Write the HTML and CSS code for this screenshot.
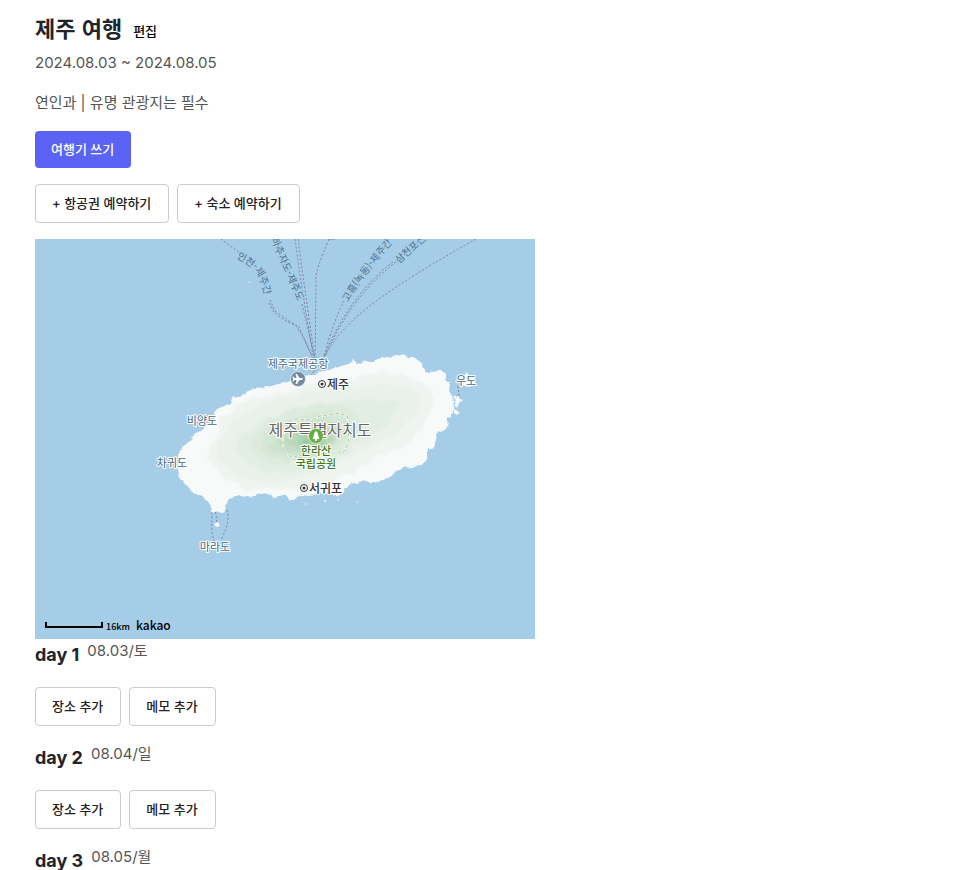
FILE: index.html
```html
<!DOCTYPE html>
<html lang="ko">
<head>
<meta charset="utf-8">
<meta name="viewport" content="width=device-width, initial-scale=1">
<title>제주 여행</title>
<link rel="stylesheet" href="styles.css">
</head>
<body>
<main class="trip">
  <header class="trip-header">
    <div class="title-row">
      <h1>제주 여행</h1>
      <button type="button" class="text-button">편집</button>
    </div>
    <p class="dates">2024.08.03 ~ 2024.08.05</p>
    <p class="tags">연인과 | 유명 관광지는 필수</p>
    <button type="button" class="button primary">여행기 쓰기</button>
    <div class="button-row">
      <button type="button" class="button">+ 항공권 예약하기</button>
      <button type="button" class="button">+ 숙소 예약하기</button>
    </div>
  </header>

  <svg class="map" viewBox="35 239 500 400" role="img" aria-label="제주특별자치도 지도">
    <defs>
      <filter id="coast" x="-5%" y="-5%" width="110%" height="110%">
        <feTurbulence type="fractalNoise" baseFrequency="0.13" numOctaves="2" seed="4" result="n"/>
        <feDisplacementMap in="SourceGraphic" in2="n" scale="6" xChannelSelector="R" yChannelSelector="G"/>
      </filter>
      <filter id="contour" x="-10%" y="-10%" width="120%" height="120%" color-interpolation-filters="sRGB">
        <feTurbulence type="fractalNoise" baseFrequency="0.08" numOctaves="2" seed="9" result="n"/>
        <feDisplacementMap in="SourceGraphic" in2="n" scale="10" xChannelSelector="R" yChannelSelector="G"/>
        <feGaussianBlur stdDeviation="1"/>
      </filter>
      <path id="route-incheon" d="M236 258Q252 266 257 274Q262 282 267 306"/>
      <path id="route-chuja" d="M271 239L303 314"/>
      <path id="route-goheung" d="M348 302Q360 279 403 231"/>
      <path id="route-samcheon" d="M399 264L440 227"/>
    </defs>
    <rect x="35" y="239" width="500" height="400" fill="#a5cde7"/>

    <g class="ferry">
      <path d="M221 239L240 253M269 303L274 312Q282 320 295 325Q303 334 314 362M270 300L275 311Q291 322 299 327L312 356"/>
      <path d="M295 239Q301 285 314 361M298 239Q304 284 315 361M302 304L315 359M333 239H329Q315 271 316 280L315 372M335 239H329"/>
      <path d="M344 301Q332 324 323 361M393 262Q348 296 322 361M396 262Q350 297 325 357M476 239Q381 292 350 323Q334 338 322 361L310 376"/>
      <path d="M213 508Q210 528 214 541M214 508Q218 518 216 524M227 510Q231 521 221 540M458 386L459 398"/>
    </g>

    <path class="land" filter="url(#coast)" d="M177 472L179 464 178 455 183 447 190 440 195 435 202 429 208 425 214 417 216 409 223 406 230 403 233 396 240 397 248 392 260 388 273 386 283 382 297 378 313 374 327 371 335 368 350 365 353 359 360 363 367 362 382 358 397 357 402 354 407 357 418 357 421 366 427 371 442 370 446 374 446 380 451 382 450 393 455 402 454 410 448 418 447 428 438 432 435 443 427 454 427 460 422 466 403 468 390 477 373 482 353 483 345 490 337 497 327 492 310 497 300 496 290 501 283 495 273 497 267 493 255 497 240 495 230 498 225 507 223 513 218 511 214 513 208 503 203 495 192 492 183 482Z"/>
    <g class="land">
      <path d="M456 397L460 401 457 408 455 405ZM454 409L459 413 457 415 454 413ZM459 375L465 375 466 372 469 375 475 377 475 385 469 387 462 385ZM214 524L218 522 220 526 216 527Z"/>
      <path d="M454 396L458 400M458 396V402L455 406M458 399L462 401M454 410L459 413" fill="none" stroke="#f8f9f9" stroke-width="2"/>
      <circle cx="249" cy="282" r="0.7"/><circle cx="306" cy="504" r="0.7"/><circle cx="325" cy="501" r="1"/><circle cx="338" cy="500" r="0.7"/><circle cx="357" cy="502" r="0.7"/>
    </g>
    <g filter="url(#contour)" fill="#5faa68">
      <path opacity="0.06" d="M207 456L210 446 217 439 218 421 235 409 248 399 288 392 318 382 348 379 382 372 408 376 432 389 433 402 428 419 405 446 368 462 335 482 288 491 245 489 222 479Z"/>
      <path opacity="0.04" d="M216 456L224 436 232 420 262 404 302 394 350 386 392 384 420 394 416 412 392 436 352 456 320 474 280 483 242 479Z"/>
      <path opacity="0.05" d="M235 452L242 436 252 426 295 406 355 399 400 402 388 426 355 446 335 459 295 472 262 472Z"/>
      <ellipse opacity="0.05" cx="306" cy="434" rx="58" ry="27" transform="rotate(-14 306 434)"/>
      <ellipse opacity="0.06" cx="306" cy="437" rx="47" ry="22" transform="rotate(-14 306 437)"/>
      <ellipse opacity="0.07" cx="306" cy="438" rx="37" ry="17" transform="rotate(-14 306 438)"/>
      <ellipse opacity="0.09" cx="307" cy="439" rx="29" ry="13" transform="rotate(-10 307 439)"/>
      <ellipse opacity="0.11" cx="309" cy="440" rx="22" ry="10"/>
      <ellipse opacity="0.14" cx="311" cy="441" rx="15" ry="7"/>
      <ellipse opacity="0.18" cx="312" cy="441" rx="10" ry="5"/>
    </g>
    <path class="park-edge" d="M284 451Q281 438 285 429Q288 420 297 419L312 420 320 416 340 413 348 417 346 427Q353 439 342 454L336 450M284 451L291 457 303 455"/>
    <path class="park" d="M284 451Q281 438 285 429Q288 420 297 419L312 420 320 416 340 413 348 417 346 427Q353 439 342 454L336 450M284 451L291 457 303 455"/>

    <g class="route-label">
      <text><textPath href="#route-incheon">인천-제주간</textPath></text>
      <text><textPath href="#route-chuja">하추자도-제주도</textPath></text>
      <text><textPath href="#route-goheung">고흥(녹동)-제주간</textPath></text>
      <text><textPath href="#route-samcheon">삼천포신항</textPath></text>
    </g>
    <g class="place-label">
      <text x="298" y="368">제주국제공항</text>
      <text x="466" y="385">우도</text>
      <text x="202" y="425">비양도</text>
      <text x="172" y="467">차귀도</text>
      <text x="215" y="551">마라도</text>
    </g>
    <text class="region-label" x="320" y="436">제주특별자치도</text>
    <g class="city-label">
      <text x="327" y="389">제주</text>
      <text x="309" y="493">서귀포</text>
    </g>
    <g fill="#fff" stroke="#333">
      <circle cx="322" cy="384" r="3.5"/><circle cx="304" cy="488" r="3.5"/>
    </g>
    <g fill="#333"><circle cx="322" cy="384" r="1.5"/><circle cx="304" cy="488" r="1.5"/></g>
    <circle cx="298" cy="379" r="7.500" fill="#708ca4" stroke="#e8f0f5" stroke-width="0.7"/>
    <path fill="#fff" d="M303 379Q303 378 301 378H299.500L297 374H295.500L296.500 378H294.500L293.500 376.500H292.500L293 379 292.500 381.500H293.500L294.500 380H296.500L295.500 384H297L299.500 380H301Q303 380 303 379Z"/>
    <circle cx="316" cy="436" r="7.500" fill="#67ad43" stroke="#edf5e8" stroke-width="0.7"/>
    <path fill="#fff" d="M316 431Q318 432 318 435L319.500 439H317V441H315V439H312.500L314 435Q314 432 316 431Z"/>
    <g class="park-label">
      <text x="316" y="455">한라산</text>
      <text x="316" y="468">국립공원</text>
    </g>
    <path d="M46 622V627H102V622" fill="none" stroke="#000" stroke-width="2"/>
    <text class="scale-label" x="106" y="630">16km</text>
    <text class="brand" x="136" y="630">kakao</text>
  </svg>

  <section class="day">
    <div class="day-heading"><h2>day 1</h2><span>08.03/토</span></div>
    <div class="button-row">
      <button type="button" class="button">장소 추가</button>
      <button type="button" class="button">메모 추가</button>
    </div>
  </section>
  <section class="day">
    <div class="day-heading"><h2>day 2</h2><span>08.04/일</span></div>
    <div class="button-row">
      <button type="button" class="button">장소 추가</button>
      <button type="button" class="button">메모 추가</button>
    </div>
  </section>
  <section class="day">
    <div class="day-heading"><h2>day 3</h2><span>08.05/월</span></div>
  </section>
</main>
</body>
</html>
```
FILE: styles.css
```css
* {
  box-sizing: border-box;
}

body {
  margin: 0;
  background: #fff;
  color: #212529;
  font-family: Inter, "Noto Sans CJK KR", sans-serif;
  font-size: 15px;
  line-height: 24px;
}

h1,
h2,
p {
  margin: 0;
}

.trip {
  padding: 12px 35px 0;
}

.title-row {
  display: flex;
  align-items: flex-end;
  gap: 11px;
}

h1 {
  font-family: "Noto Sans CJK KR", sans-serif;
  font-size: 22px;
  line-height: 31px;
  font-weight: 700;
}

.text-button {
  padding: 0;
  border: 0;
  background: none;
  color: #000;
  font: 500 13px/24px Inter, "Noto Sans CJK KR", sans-serif;
}

.dates,
.tags {
  color: #555;
}

.dates {
  margin-top: 8px;
}

.tags {
  margin: 16px 0;
}

.button {
  padding: 8px 17px 8px 16px;
  border: 1px solid #cacad2;
  border-radius: 4px;
  background: #fff;
  color: #222;
  font: 500 13px/21px Inter, "Noto Sans CJK KR", sans-serif;
}

.primary {
  display: block;
  border: 0;
  background: #5b63f5;
  color: #fff;
}

.button-row {
  display: flex;
  gap: 8px;
}

.trip-header .button-row {
  margin: 16px 0;
}

.map {
  display: block;
  width: 100%;
  max-width: 500px;
}

.day + .day {
  margin-top: 16px;
}

.day-heading {
  display: flex;
  gap: 8px;
}

.day .button-row {
  margin-top: 20px;
}

h2 {
  padding-top: 4px;
  font-size: 18px;
  line-height: 24px;
  font-weight: 700;
}

.day-heading span {
  color: #555;
}

.map text {
  font-family: "Noto Sans CJK KR", sans-serif;
  paint-order: stroke;
  stroke-linejoin: round;
}

.land {
  fill: #f8f9f9;
}

.ferry {
  fill: none;
  stroke: #7c7fa3;
  stroke-width: 1;
  stroke-dasharray: 2 2;
}

.park,
.park-edge {
  fill: none;
  stroke: #eef6ee;
  stroke-width: 2;
}

.park {
  stroke: #a3d0a3;
  stroke-width: 1;
  stroke-dasharray: 4 2;
}

.map .route-label text {
  fill: #4d718e;
  stroke: #a5cde7;
  stroke-width: 2px;
  font-size: 10px;
}

.place-label text {
  fill: #426985;
  stroke: #fff;
  stroke-width: 2px;
  font-size: 11px;
  text-anchor: middle;
}

.region-label {
  fill: #666;
  stroke: #fff;
  stroke-width: 2px;
  font-size: 16px;
  text-anchor: middle;
}

.city-label text {
  fill: #333;
  stroke: #fff;
  stroke-width: 2px;
  font-size: 12px;
  font-weight: 500;
}

.park-label text {
  fill: #3c7a1c;
  stroke: #fff;
  stroke-width: 2px;
  font-size: 11px;
  font-weight: 500;
  text-anchor: middle;
}

.map .scale-label {
  font-size: 9px;
  font-weight: 500;
}

.map .brand {
  font-size: 12px;
  font-weight: 500;
}
```
